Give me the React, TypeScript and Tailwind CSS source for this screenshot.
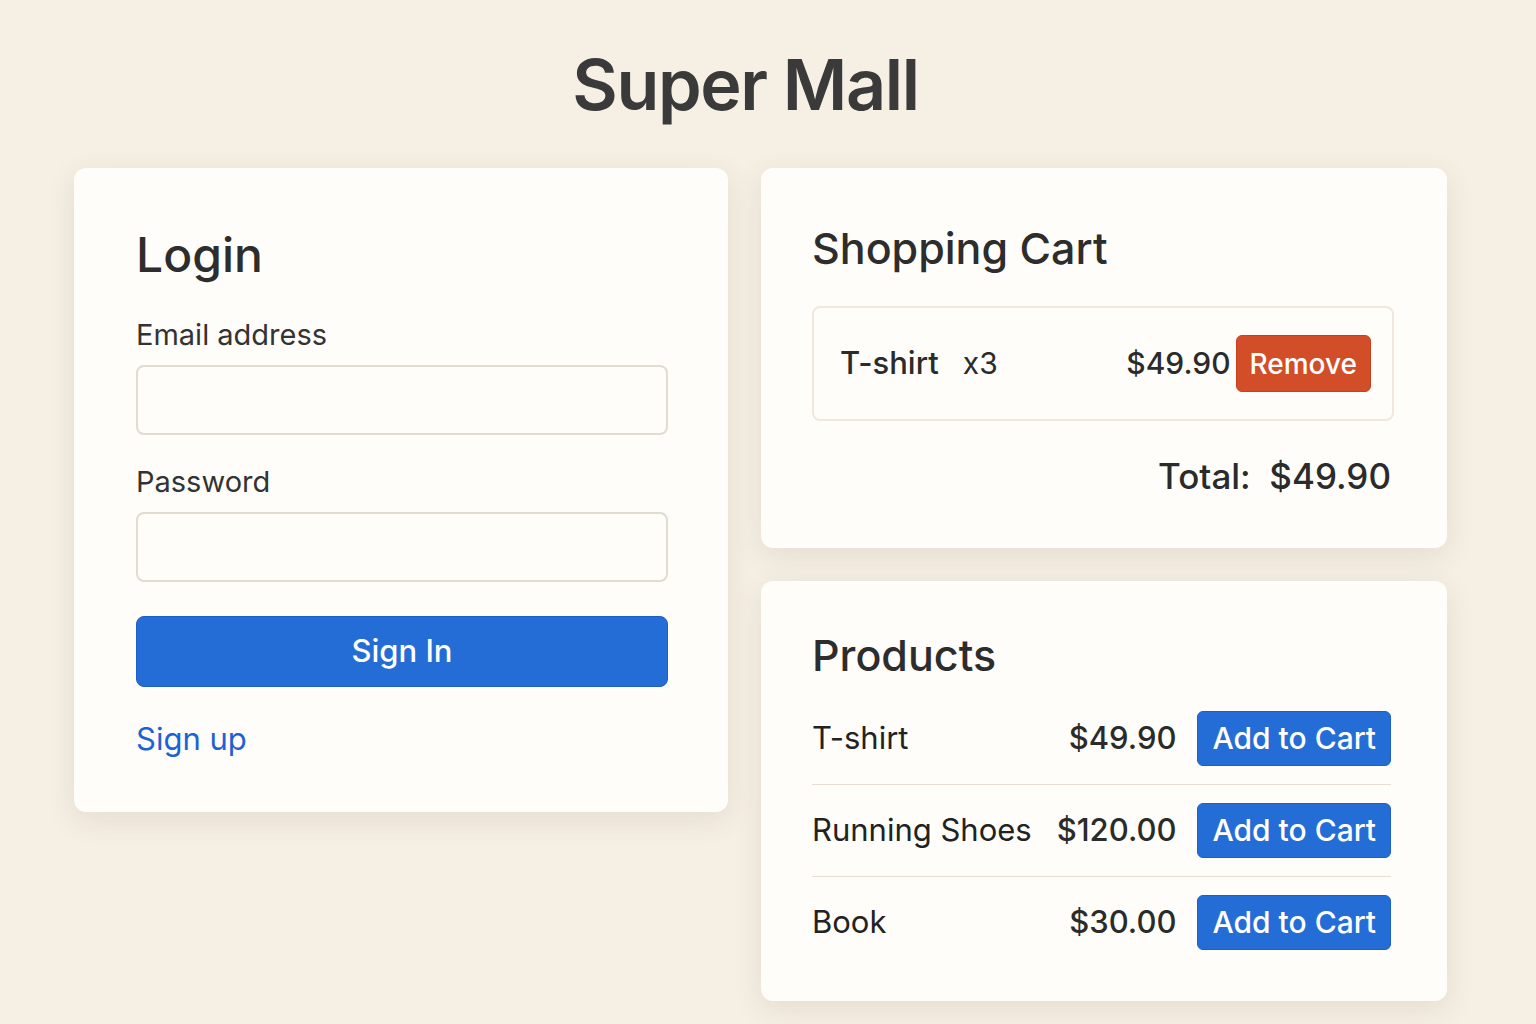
const PRODUCTS = [
  { name: 'T-shirt', price: '$49.90' },
  { name: 'Running Shoes', price: '$120.00' },
  { name: 'Book', price: '$30.00' },
]

const FONT = "font-['Inter','Noto_Sans',sans-serif]"
const CARD = 'rounded-xl bg-[#fefdf9] shadow-[0_8px_28px_rgba(120,100,70,0.13)]'

const App = () => {
  return (
    <div className={`min-h-screen w-full bg-[#f5efe4] ${FONT} text-[#2b2b2b] pb-6`}>
      <div className="ml-[74px] w-[1373px]">
        {/* Tiêu đề */}
        <h1 className="pt-[45px] pr-[30px] text-center text-[70px] leading-[80px] font-semibold tracking-[-0.02em] text-[#3a3a3a]">
          Super Mall
        </h1>

        <div className="mt-[43px] grid grid-cols-[654px_686px] gap-[33px] items-start">
          {/* Login */}
          <div className={`${CARD} pl-[62px] pr-[60px] pt-[58px] pb-[53px]`}>
            <h2 className="text-[48px] leading-[58px] font-medium text-[#2d2d2d]">Login</h2>
            <label className="block mt-[34px] text-[29px] leading-[34px] text-[#333]">
              Email address
            </label>
            <input
              type="email"
              className="mt-[13px] block w-full h-[70px] rounded-lg border-2 border-[#e2dccf] bg-[#fefdf9] px-4 text-[26px] outline-none"
            />
            <label className="block mt-[30px] text-[29px] leading-[34px] text-[#333]">Password</label>
            <input
              type="password"
              className="mt-[13px] block w-full h-[70px] rounded-lg border-2 border-[#e2dccf] bg-[#fefdf9] px-4 text-[26px] outline-none"
            />
            <button className="mt-[34px] w-full h-[71px] rounded-lg bg-[#256dd6] border border-[#1c5fc6] text-white text-[31px] font-medium">
              Sign In
            </button>
            <a href="#" className="block mt-[32px] text-[31px] leading-[40px] text-[#1d62d4]">
              Sign up
            </a>
          </div>

          <div className="flex flex-col gap-[33px]">
            {/* Giỏ hàng */}
            <div className={`${CARD} pl-[51px] pr-[53px] pt-[53px] pb-[50px]`}>
              <h2 className="text-[43px] leading-[54px] font-medium text-[#2d2d2d]">Shopping Cart</h2>
              <div className="mt-[31px] flex items-center h-[115px] rounded-lg border-2 border-[#f0e8dc] pl-[26px] pr-[21px]">
                <span className="text-[31px] font-medium">T-shirt</span>
                <span className="ml-[24px] text-[30px]">x3</span>
                <span className="ml-auto text-[30px] font-medium">$49.90</span>
                <button className="ml-[5px] h-[57px] px-[13px] rounded-md bg-[#d24e28] border border-[#c8401c] text-white text-[28px] font-medium">
                  Remove
                </button>
              </div>
              <div className="mt-[33px] pr-[3px] text-right text-[35px] leading-[44px] font-medium">
                Total:&nbsp; $49.90
              </div>
            </div>

            {/* Sản phẩm */}
            <div className={`${CARD} pl-[51px] pr-[56px] pt-[47px] pb-[33px]`}>
              <h2 className="text-[43px] leading-[54px] font-medium text-[#2d2d2d]">Products</h2>
              <div className="mt-[11px]">
                {PRODUCTS.map((p, i) => (
                  <div
                    key={p.name}
                    className={`flex items-center py-[18px] ${i > 0 ? 'border-t border-[#e8dfd2]' : ''}`}
                  >
                    <span className="text-[31px] text-[#222]">{p.name}</span>
                    <span className="ml-auto text-[31px] font-medium">{p.price}</span>
                    <button className="ml-[21px] h-[55px] px-[14px] rounded-md bg-[#256dd6] border border-[#1c5fc6] text-white text-[30px] font-medium">
                      Add to Cart
                    </button>
                  </div>
                ))}
              </div>
            </div>
          </div>
        </div>
      </div>
    </div>
  )
}

export default App
